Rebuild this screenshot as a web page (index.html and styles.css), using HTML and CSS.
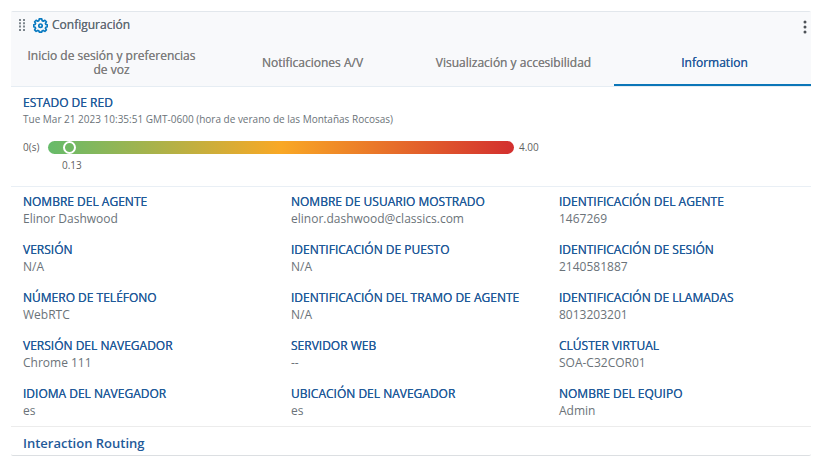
FILE: index.html
```html
<!DOCTYPE html>
<html lang="es">
<head>
<meta charset="utf-8">
<meta name="viewport" content="width=device-width, initial-scale=1">
<title>Configuración</title>
<link rel="stylesheet" href="styles.css">
</head>
<body>
<main class="panel">
  <header class="panel-header">
    <div class="title-bar">
      <svg class="grip" viewBox="0 0 6 12" aria-hidden="true">
        <path d="M0 0h2v2H0zM4 0h2v2H4zM0 3.3h2v2H0zM4 3.3h2v2H4zM0 6.6h2v2H0zM4 6.6h2v2H4zM0 10h2v2H0zM4 10h2v2H4z"/>
      </svg>
      <svg class="gear" viewBox="0 0 24 24" aria-hidden="true">
        <path d="M10 1.500h4l.7 2.900 1.700.7L19 3.600 21.400 6l-1.500 2.600.7 1.700 2.400.7v3l-2.400.7-.7 1.700 1.500 2.600-2.400 2.400-2.600-1.500-1.700.7L14 22.500h-4l-.7-1.900-1.700-.7L5 21.400 2.600 19l1.500-2.600-.7-1.700L1 14v-3l2.400-.7.700-1.700L2.600 6 5 3.600l2.600 1.500 1.700-.7z"/>
        <circle cx="12" cy="12.300" r="2.700"/>
      </svg>
      <h1>Configuración</h1>
      <button class="menu" type="button" aria-label="Más opciones">
        <svg viewBox="0 0 4 14" aria-hidden="true"><circle cx="2" cy="2" r="1.500"/><circle cx="2" cy="7" r="1.500"/><circle cx="2" cy="12" r="1.500"/></svg>
      </button>
    </div>
    <nav class="tabs" role="tablist">
      <button type="button" role="tab" aria-selected="false">Inicio de sesión y preferencias de voz</button>
      <button type="button" role="tab" aria-selected="false">Notificaciones A/V</button>
      <button type="button" role="tab" aria-selected="false">Visualización y accesibilidad</button>
      <button type="button" role="tab" aria-selected="true">Information</button>
    </nav>
  </header>

  <section class="network">
    <h2>ESTADO DE RED</h2>
    <p class="stamp">Tue Mar 21 2023 10:35:51 GMT-0600 (hora de verano de las Montañas Rocosas)</p>
    <div class="meter">
      <label for="latency">0(s)</label>
      <input id="latency" type="range" min="0" max="4" step="0.01" value="0.13">
      <span>4.00</span>
      <output for="latency">0.13</output>
    </div>
  </section>

  <dl class="details">
    <div><dt>NOMBRE DEL AGENTE</dt><dd>Elinor Dashwood</dd></div>
    <div><dt>NOMBRE DE USUARIO MOSTRADO</dt><dd>elinor.dashwood@classics.com</dd></div>
    <div><dt>IDENTIFICACIÓN DEL AGENTE</dt><dd>1467269</dd></div>
    <div><dt>VERSIÓN</dt><dd>N/A</dd></div>
    <div><dt>IDENTIFICACIÓN DE PUESTO</dt><dd>N/A</dd></div>
    <div><dt>IDENTIFICACIÓN DE SESIÓN</dt><dd>2140581887</dd></div>
    <div><dt>NÚMERO DE TELÉFONO</dt><dd>WebRTC</dd></div>
    <div><dt>IDENTIFICACIÓN DEL TRAMO DE AGENTE</dt><dd>N/A</dd></div>
    <div><dt>IDENTIFICACIÓN DE LLAMADAS</dt><dd>8013203201</dd></div>
    <div><dt>VERSIÓN DEL NAVEGADOR</dt><dd>Chrome 111</dd></div>
    <div><dt>SERVIDOR WEB</dt><dd>--</dd></div>
    <div><dt>CLÚSTER VIRTUAL</dt><dd>SOA-C32COR01</dd></div>
    <div><dt>IDIOMA DEL NAVEGADOR</dt><dd>es</dd></div>
    <div><dt>UBICACIÓN DEL NAVEGADOR</dt><dd>es</dd></div>
    <div><dt>NOMBRE DEL EQUIPO</dt><dd>Admin</dd></div>
  </dl>

  <h2 class="routing">Interaction Routing</h2>
</main>
</body>
</html>
```
FILE: styles.css
```css
* {
  box-sizing: border-box;
}

body {
  margin: 11px 12px 11px 11px;
  background: #fff;
  color: #6b7379;
  font: 12px/16px "Open Sans", sans-serif;
}

h1, h2, p, dl, dd {
  margin: 0;
}

button {
  border: 0;
  background: none;
  font: inherit;
  color: inherit;
}

.panel {
  overflow: hidden;
  border-top: 1px solid #e2e7ec;
  border-bottom: 1px solid #dcdfe2;
  border-radius: 2px;
}

.panel-header {
  background: #f8f9fb;
  border-bottom: 1px solid #e6edf3;
}

.title-bar {
  display: flex;
  align-items: center;
  height: 26px;
  padding: 0 4px 0 8px;
}

.grip {
  width: 6px;
  height: 12px;
  margin-right: 8px;
  fill: #7d868d;
}

.gear {
  width: 15px;
  height: 15px;
  margin-right: 4px;
  fill: none;
  stroke: #0b7bc1;
  stroke-width: 2.7;
  stroke-linejoin: round;
}

/* A zero-blur shadow gives these a weight between regular and semibold. */
h1,
h2,
dt,
.tabs button {
  font-size: 12px;
  font-weight: 400;
  text-shadow: 0 0 0 currentColor;
}

h1 {
  color: #5f6b74;
}

h2,
dt {
  color: #1f5a99;
}

.menu {
  display: flex;
  margin-left: auto;
  padding: 3px 0 0;
}

.menu svg {
  width: 4px;
  height: 14px;
  fill: #4d5257;
}

/* The row runs slightly past the panel edge, which clips it. */
.tabs {
  display: grid;
  grid-template-columns: repeat(4, 1fr);
  height: 48px;
  margin-right: -4px;
}

.tabs button {
  padding: 4px 16px 0;
  border-bottom: 2px solid transparent;
  color: #7e7e7e;
  line-height: 14px;
}

.tabs [aria-selected="true"] {
  border-color: #0b76b8;
  color: #25599a;
}

.network {
  padding: 8px 12px 13px;
  border-bottom: 1px solid #e9eff5;
}

.stamp {
  font-size: 10px;
}

.meter {
  display: grid;
  grid-template-columns: 20px minmax(0, 466px) auto;
  column-gap: 5px;
  row-gap: 2px;
  align-items: center;
  margin-top: 12px;
  color: #5f5f5f;
  font-size: 10px;
}

.meter output {
  grid-column: 2;
  margin-left: 14px;
}

.meter input {
  width: 100%;
  height: 13px;
  margin: 0;
  border-radius: 7px;
  appearance: none;
  background: linear-gradient(90deg, #66bb6a, #f9a825 50%, #d32f2f);
}

.meter input::-webkit-slider-thumb {
  width: 13px;
  height: 13px;
  border: 2px solid #fff;
  border-radius: 50%;
  appearance: none;
  background: #70b862;
}

.details {
  display: grid;
  grid-template-columns: repeat(3, 1fr);
  row-gap: 14px;
  padding: 6px 0 7px 12px;
  margin-right: -16px;
  border-bottom: 1px solid #ececec;
}

.details div {
  line-height: 17px;
}

.routing {
  padding: 8px 12px 3px;
  font-size: 13px;
  font-weight: 600;
  line-height: 17px;
  text-shadow: none;
}
```
